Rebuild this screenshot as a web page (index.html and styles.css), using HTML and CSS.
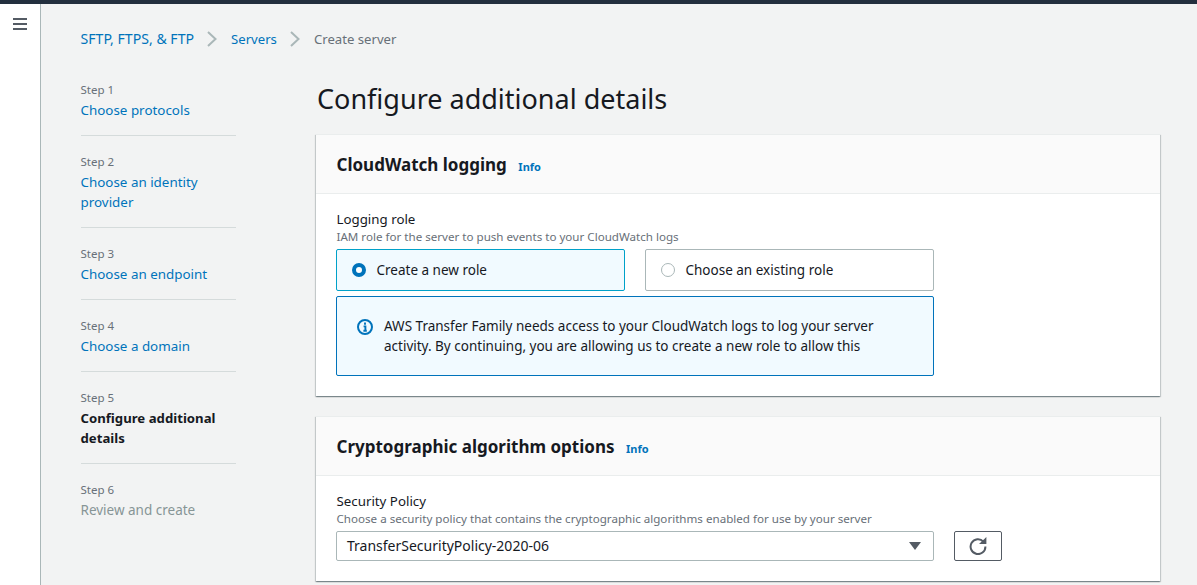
FILE: index.html
```html
<!DOCTYPE html>
<html lang="en">
<head>
<meta charset="utf-8">
<title>Configure additional details</title>
<link rel="stylesheet" href="styles.css">
</head>
<body>
<div class="topbar"></div>
<div class="shell">
  <aside class="rail">
    <svg class="menu" width="14" height="12" viewBox="0 0 14 12"><path d="M0 1h14M0 6h14M0 11h14" stroke="#545b64" stroke-width="2" fill="none"/></svg>
  </aside>
  <main class="main">
    <nav class="crumbs">
      <a class="link crumb-first">SFTP, FTPS, &amp; FTP</a>
      <svg class="chev" width="10" height="16" viewBox="0 0 10 16"><path d="M1 1l7.5 7L1 15" stroke="#aab7b8" stroke-width="2" fill="none"/></svg>
      <a class="link">Servers</a>
      <svg class="chev" width="10" height="16" viewBox="0 0 10 16"><path d="M1 1l7.5 7L1 15" stroke="#aab7b8" stroke-width="2" fill="none"/></svg>
      <span class="crumb-current">Create server</span>
    </nav>
    <div class="columns">
      <ol class="steps">
        <li class="step"><div class="step-num">Step 1</div><a class="link step-label">Choose protocols</a></li>
        <li class="step"><div class="step-num">Step 2</div><a class="link step-label">Choose an identity provider</a></li>
        <li class="step"><div class="step-num">Step 3</div><a class="link step-label">Choose an endpoint</a></li>
        <li class="step"><div class="step-num">Step 4</div><a class="link step-label">Choose a domain</a></li>
        <li class="step"><div class="step-num">Step 5</div><span class="step-label step-active">Configure additional details</span></li>
        <li class="step"><div class="step-num">Step 6</div><span class="step-label step-disabled">Review and create</span></li>
      </ol>
      <div class="content">
        <h1 class="title">Configure additional details</h1>
        <section class="card">
          <header class="card-head"><h2 class="card-title">CloudWatch logging</h2><a class="info">Info</a></header>
          <div class="card-body">
            <div class="label">Logging role</div>
            <div class="hint">IAM role for the server to push events to your CloudWatch logs</div>
            <div class="tiles">
              <div class="tile tile-on"><span class="radio radio-on"></span>Create a new role</div>
              <div class="tile"><span class="radio"></span>Choose an existing role</div>
            </div>
            <div class="alert">
              <svg class="alert-icon" width="16" height="16" viewBox="0 0 16 16"><circle cx="8" cy="8" r="7" fill="none" stroke="#0073bb" stroke-width="2"/><path d="M8 3.6v2.2M6.6 7.4H8.4v4.2M6.4 11.8h3.4" stroke="#0073bb" stroke-width="1.9" fill="none"/></svg>
              <p class="alert-text">AWS Transfer Family needs access to your CloudWatch logs to log your server activity. By continuing, you are allowing us to create a new role to allow this</p>
            </div>
          </div>
        </section>
        <section class="card">
          <header class="card-head"><h2 class="card-title">Cryptographic algorithm options</h2><a class="info">Info</a></header>
          <div class="card-body">
            <div class="label">Security Policy</div>
            <div class="hint">Choose a security policy that contains the cryptographic algorithms enabled for use by your server</div>
            <div class="policy-row">
              <div class="select">TransferSecurityPolicy-2020-06<svg width="12" height="8" viewBox="0 0 12 8"><path d="M0 0h12L6 8z" fill="#545b64"/></svg></div>
              <button class="refresh" type="button"><svg width="18" height="18" viewBox="0 0 18 18"><path d="M14.4 4.6A7.4 7.4 0 1 0 16.4 9.6" fill="none" stroke="#545b64" stroke-width="2"/><path d="M10 7h7.4V0z" fill="#545b64"/></svg></button>
            </div>
          </div>
        </section>
      </div>
    </div>
  </main>
</div>
</body>
</html>
```
FILE: styles.css
```css
* { box-sizing: border-box; }
html, body { margin: 0; height: 100%; overflow: hidden; }
body { font-family: "Noto Sans", sans-serif; font-size: 13.5px; line-height: 20px; color: #16191f; background: #f2f3f3; }
.topbar { height: 4px; background: #232f3e; }
.shell { display: flex; height: 581px; }
.rail { width: 41px; flex: none; background: #fff; border-right: 1px solid #aab7b8; padding: 14px 0 0 13px; }
.menu { display: block; }
.main { flex: 1; padding: 25px 37px 0 39px; min-width: 0; }
.link { color: #0073bb; }
.crumbs { display: flex; align-items: center; height: 20px; padding-left: 0.5px; font-size: 13.15px; }
.crumb-first { font-size: 14.1px; }
.chev { margin: 0 14px 0 13px; }
.crumb-current { color: #687078; }
.columns { display: flex; margin-top: 31px; }
.steps { list-style: none; margin: 0; padding: 0; width: 156px; flex: none; }
.step { padding: 0 0 15px 0; margin: 0 0 16px 1px; border-bottom: 1px solid #d5dbdb; }
.step-num, .step-label { margin-left: -0.5px; }
.step:last-child { border-bottom: 0; }
.step-num { font-size: 11.5px; color: #687078; line-height: 20px; }
.step-label { display: block; font-size: 13.4px; }
.step-active { font-weight: 700; font-size: 13.2px; }
.step-disabled { color: #879596; font-size: 13.5px; }
.content { flex: 1; margin-left: 80px; margin-top: -2px; min-width: 0; }
.title { margin: 0 0 16px 1px; font-size: 27px; line-height: 40px; font-weight: 400; height: 40px; padding-top: 1px; }
.card { background: #fff; box-shadow: 0 1px 1px 0 rgba(0,28,36,.3), 1px 1px 1px 0 rgba(0,28,36,.15), -1px 1px 1px 0 rgba(0,28,36,.15); margin-bottom: 20px; border-top: 1px solid #eaeded; }
.card-head { display: flex; align-items: baseline; gap: 11.5px; height: 59px; padding: 19px 20.5px 0; background: #fafafa; border-bottom: 1px solid #eaeded; }
.card-title { margin: 0; font-size: 17px; line-height: 22px; font-weight: 700; }
.info { color: #0073bb; font-size: 11px; font-weight: 700; }
.card-body { padding: 15px 20px 20px; }
.label { line-height: 20px; font-size: 13.3px; padding-left: 0.5px; }
.hint { font-size: 11.6px; line-height: 15px; color: #687078; padding-left: 0.5px; }
.tiles { display: flex; gap: 20px; width: 598px; margin-top: 5px; }
.tile { flex: 1; display: flex; align-items: center; height: 42px; padding-left: 15px; background: #fff; border: 1px solid #aab7b8; border-radius: 2px; }
.tile-on { background: #f1faff; border-color: #00a1c9; }
.radio { width: 14px; height: 14px; margin-right: 10.5px; border-radius: 50%; border: 1px solid #aab7b8; background: #fff; flex: none; }
.radio-on { border: 4.5px solid #0073bb; }
.alert { display: flex; width: 598px; height: 80px; margin-top: 5px; padding: 19px 40px 0 20px; background: #f1faff; border: 1px solid #0073bb; border-radius: 2px; }
.alert-icon { flex: none; margin: 3px 11px 0 0; }
.alert-text { margin: 0; font-size: 13.5px; }
.policy-row { display: flex; gap: 20px; margin-top: 5px; }
.select { display: flex; align-items: center; justify-content: space-between; width: 598px; height: 30px; padding: 0 12px 0 10px; background: #fff; border: 1px solid #aab7b8; border-radius: 2px; font-size: 14px; }
.refresh { display: flex; align-items: center; justify-content: center; width: 48px; height: 30px; padding: 0; background: #fff; border: 1px solid #545b64; border-radius: 2px; }
```
